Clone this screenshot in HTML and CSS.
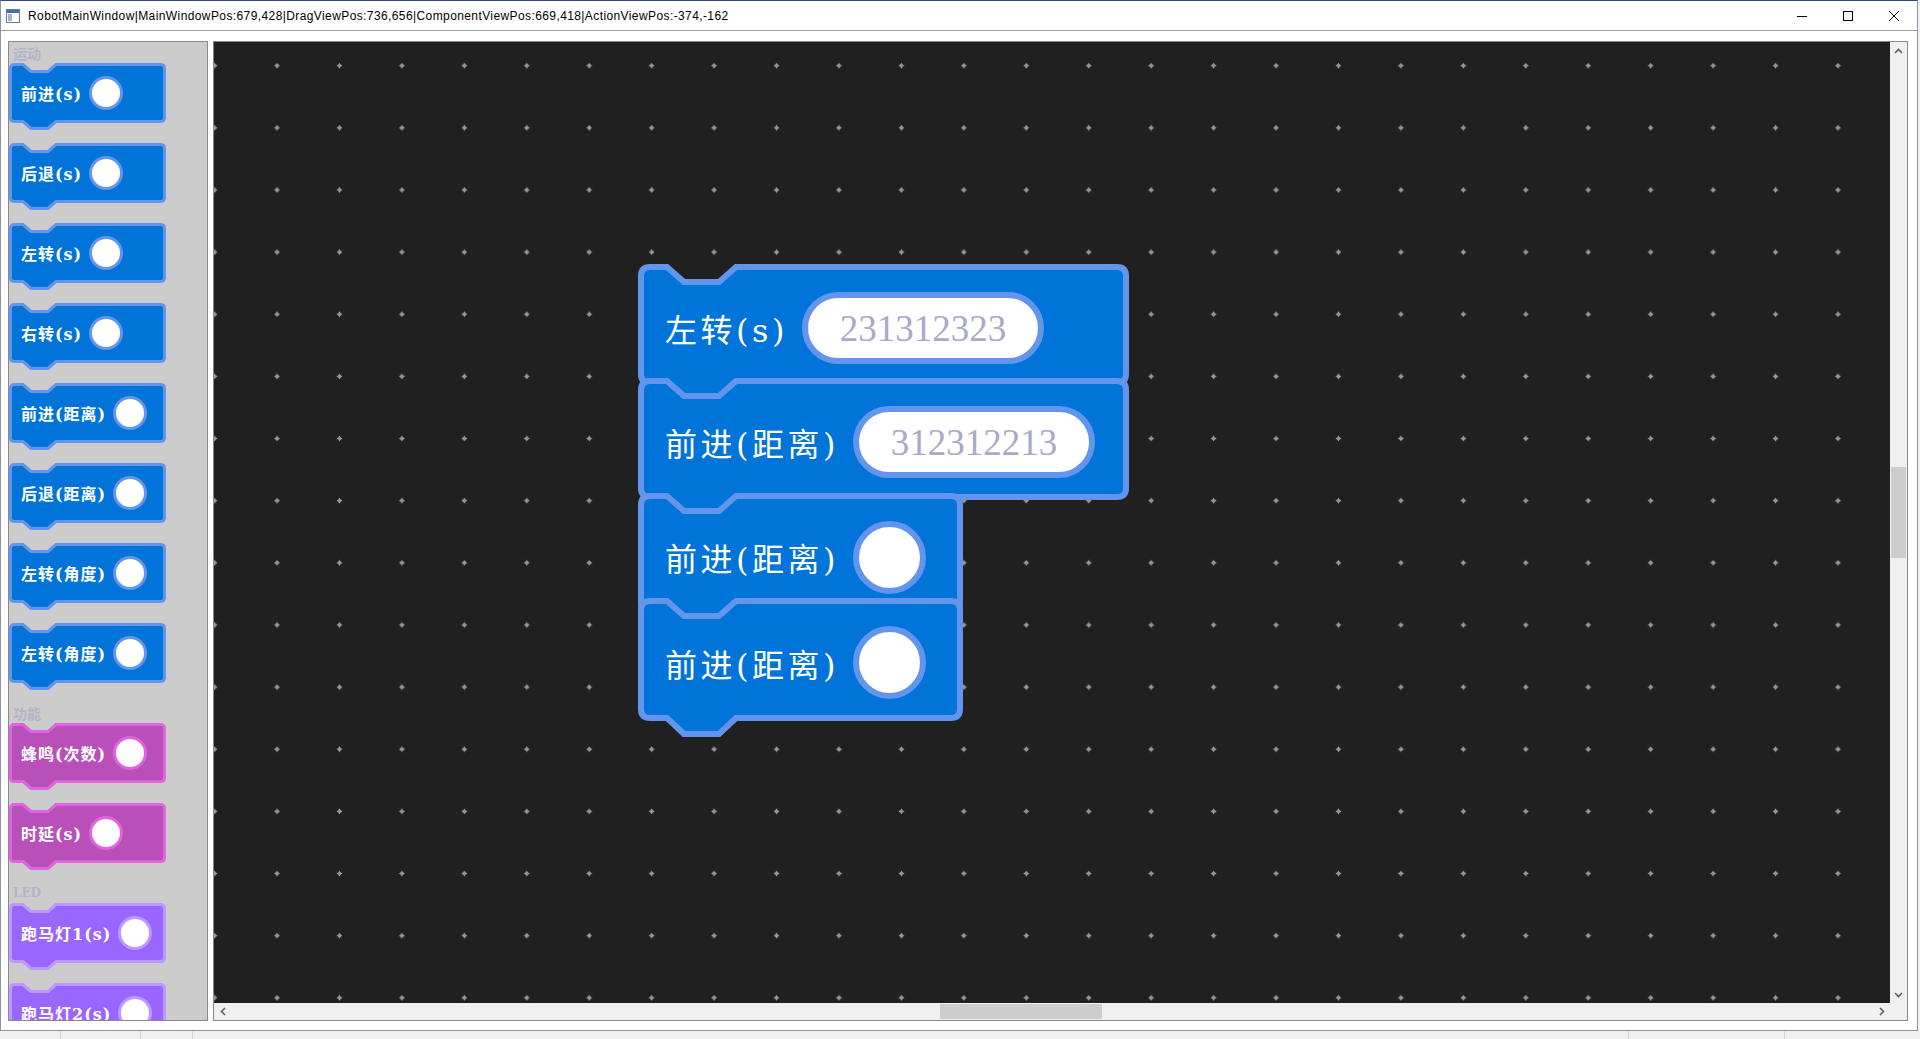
FILE: index.html
```html
<!DOCTYPE html>
<html lang="zh">
<head>
<meta charset="utf-8">
<title>RobotMainWindow</title>
<link rel="stylesheet" href="styles.css">
</head>
<body>
<svg class="defs" width="0" height="0" aria-hidden="true">
  <defs>
    <path id="pb" d="M1.5,5.5 Q1.5,1.5 5.5,1.5 H14 L22,8.5 H39 L47,1.5 H151.5 Q155.5,1.5 155.5,5.5 V54.5 Q155.5,58.5 151.5,58.5 H47 L39,65.5 H22 L14,58.5 H5.5 Q1.5,58.5 1.5,54.5 Z"/>
    <path id="cw" d="M3,12 Q3,3 12,3 H29 L46,18 H81 L98,3 H479 Q488,3 488,12 V110 Q488,119 479,119 H98 L81,134 H46 L29,119 H12 Q3,119 3,110 Z"/>
    <path id="cn" d="M3,12 Q3,3 12,3 H29 L46,18 H81 L98,3 H313 Q322,3 322,12 V111 Q322,120 313,120 H98 L81,136 H46 L29,120 H12 Q3,120 3,111 Z"/>
  </defs>
</svg>
<div class="window">
  <div class="titlebar">
    <svg class="app-icon" width="14" height="14" viewBox="0 0 14 14">
      <rect x="0.5" y="0.5" width="13" height="13" fill="#ffffff" stroke="#6d7b8f"/>
      <rect x="1" y="1" width="12" height="3" fill="#3a6fb0"/>
      <rect x="2" y="5" width="4" height="7" fill="#9fb4cf"/>
    </svg>
    <span class="title">RobotMainWindow|MainWindowPos:679,428|DragViewPos:736,656|ComponentViewPos:669,418|ActionViewPos:-374,-162</span>
    <div class="controls">
      <div class="cbtn"><svg width="10" height="10" viewBox="0 0 10 10"><path d="M0 5.5H10" stroke="#000" stroke-width="1"/></svg></div>
      <div class="cbtn"><svg width="10" height="10" viewBox="0 0 10 10"><rect x="0.5" y="0.5" width="9" height="9" fill="none" stroke="#000" stroke-width="1"/></svg></div>
      <div class="cbtn"><svg width="10" height="10" viewBox="0 0 10 10"><path d="M0 0L10 10M10 0L0 10" stroke="#000" stroke-width="1"/></svg></div>
    </div>
  </div>
  <div class="client">
    <div class="palette">
      <div class="cat">运动</div>
      <div class="pblock blue"><svg class="shape" width="157" height="70"><use href="#pb"/></svg><span class="plabel">前进(s)</span><span class="pdot"></span></div>
      <div class="pblock blue"><svg class="shape" width="157" height="70"><use href="#pb"/></svg><span class="plabel">后退(s)</span><span class="pdot"></span></div>
      <div class="pblock blue"><svg class="shape" width="157" height="70"><use href="#pb"/></svg><span class="plabel">左转(s)</span><span class="pdot"></span></div>
      <div class="pblock blue"><svg class="shape" width="157" height="70"><use href="#pb"/></svg><span class="plabel">右转(s)</span><span class="pdot"></span></div>
      <div class="pblock blue"><svg class="shape" width="157" height="70"><use href="#pb"/></svg><span class="plabel">前进(距离)</span><span class="pdot"></span></div>
      <div class="pblock blue"><svg class="shape" width="157" height="70"><use href="#pb"/></svg><span class="plabel">后退(距离)</span><span class="pdot"></span></div>
      <div class="pblock blue"><svg class="shape" width="157" height="70"><use href="#pb"/></svg><span class="plabel">左转(角度)</span><span class="pdot"></span></div>
      <div class="pblock blue"><svg class="shape" width="157" height="70"><use href="#pb"/></svg><span class="plabel">左转(角度)</span><span class="pdot"></span></div>
      <div class="cat">功能</div>
      <div class="pblock pink"><svg class="shape" width="157" height="70"><use href="#pb"/></svg><span class="plabel">蜂鸣(次数)</span><span class="pdot"></span></div>
      <div class="pblock pink"><svg class="shape" width="157" height="70"><use href="#pb"/></svg><span class="plabel">时延(s)</span><span class="pdot"></span></div>
      <div class="cat cat-latin">LED</div>
      <div class="pblock purple"><svg class="shape" width="157" height="70"><use href="#pb"/></svg><span class="plabel">跑马灯1(s)</span><span class="pdot"></span></div>
      <div class="pblock purple"><svg class="shape" width="157" height="70"><use href="#pb"/></svg><span class="plabel">跑马灯2(s)</span><span class="pdot"></span></div>
    </div>
    <div class="view">
      <div class="view-main">
        <div class="canvas">
          <div class="cblock wide b1"><svg class="shape" width="491" height="140"><use href="#cw"/></svg><span class="clabel">左转(s)</span><span class="pill">231312323</span></div>
          <div class="cblock wide b2"><svg class="shape" width="491" height="140"><use href="#cw"/></svg><span class="clabel">前进(距离)</span><span class="pill">312312213</span></div>
          <div class="cblock narrow b3"><svg class="shape" width="325" height="140"><use href="#cn"/></svg><span class="clabel">前进(距离)</span><span class="cdot"></span></div>
          <div class="cblock narrow b4"><svg class="shape" width="325" height="140"><use href="#cn"/></svg><span class="clabel">前进(距离)</span><span class="cdot"></span></div>
        </div>
        <div class="vscroll">
          <div class="sbtn"><svg width="9" height="6" viewBox="0 0 9 6"><path d="M1 5L4.5 1.5L8 5" fill="none" stroke="#606060" stroke-width="1.6"/></svg></div>
          <div class="vtrack"><div class="vthumb"></div></div>
          <div class="sbtn"><svg width="9" height="6" viewBox="0 0 9 6"><path d="M1 1L4.5 4.5L8 1" fill="none" stroke="#606060" stroke-width="1.6"/></svg></div>
        </div>
      </div>
      <div class="hbar">
        <div class="hscroll">
          <div class="sbtn"><svg width="6" height="9" viewBox="0 0 6 9"><path d="M5 1L1.5 4.5L5 8" fill="none" stroke="#606060" stroke-width="1.6"/></svg></div>
          <div class="htrack"><div class="hthumb"></div></div>
          <div class="sbtn"><svg width="6" height="9" viewBox="0 0 6 9"><path d="M1 1L4.5 4.5L1 8" fill="none" stroke="#606060" stroke-width="1.6"/></svg></div>
        </div>
        <div class="corner"></div>
      </div>
    </div>
  </div>
</div>
<div class="strip">
  <span class="sep s1"></span><span class="sep s2"></span><span class="sep s3"></span><span class="sep s4"></span><span class="sep s5"></span>
</div>
</body>
</html>
```
FILE: styles.css
```css
* { box-sizing: border-box; }
html, body { margin: 0; padding: 0; }
body {
  width: 1920px;
  height: 1039px;
  overflow: hidden;
  background: #f0f0f0;
  font-family: "Liberation Sans", "Noto Sans CJK SC", sans-serif;
}
.defs { position: absolute; width: 0; height: 0; overflow: hidden; }

.window {
  width: 1918px;
  height: 1031px;
  border: 1px solid #8d95a3;
  border-top-color: #2c4a80;
  background: #ffffff;
  display: flex;
  flex-direction: column;
}

/* ---------- title bar ---------- */
.titlebar {
  height: 30px;
  flex: none;
  display: flex;
  align-items: center;
  border-bottom: 1px solid #9c9c9c;
}
.app-icon { margin-left: 5px; flex: none; }
.title {
  margin-left: 8px;
  font-size: 12px;
  letter-spacing: 0.4px;
  color: #000;
  white-space: nowrap;
}
.controls { margin-left: auto; display: flex; height: 100%; }
.cbtn { width: 46px; height: 100%; display: flex; align-items: center; justify-content: center; }

/* ---------- client ---------- */
.client {
  flex: 1;
  display: flex;
  gap: 5px;
  padding: 10px 9px 9px 7px;
  min-height: 0;
}

/* ---------- palette ---------- */
.palette {
  width: 200px;
  flex: none;
  border: 1px solid #8a8a8a;
  background: #cccccc;
  overflow: hidden;
  display: flex;
  flex-direction: column;
  align-items: flex-start;
  padding-top: 1px;
}
.cat {
  height: 20px;
  line-height: 20px;
  padding-left: 4px;
  font-family: "Noto Sans CJK SC", sans-serif;
  font-weight: bold;
  font-size: 14px;
  color: #b4b4c8;
  flex: none;
}
.cat-latin { font-family: "DejaVu Serif", serif; font-size: 12px; }
.pblock {
  position: relative;
  flex: none;
  width: 157px;
  height: 60px;
  margin-bottom: 20px;
  display: flex;
  align-items: center;
  gap: 7px;
  padding-left: 12px;
}
.shape {
  position: absolute;
  left: 0;
  top: 0;
  overflow: visible;
}
.pblock .shape { stroke-width: 3; }
.blue .shape { fill: #0074d9; stroke: #6495ed; }
.pink .shape { fill: #b94fb9; stroke: #dd66dd; }
.purple .shape { fill: #9966ff; stroke: #bb99ff; }
.plabel {
  position: relative;
  font-family: "DejaVu Serif", "Noto Sans CJK SC", serif;
  font-weight: bold;
  font-size: 16px;
  letter-spacing: 1px;
  color: #ffffff;
  white-space: nowrap;
}
.pdot {
  position: relative;
  width: 34px;
  height: 34px;
  border-radius: 50%;
  background: #ffffff;
  border: 3px solid #6495ed;
  flex: none;
}
.pink .pdot { border-color: #dd66dd; }
.purple .pdot { border-color: #bb99ff; }

/* ---------- graphics view ---------- */
.view {
  flex: 1;
  border: 1px solid #888888;
  display: flex;
  flex-direction: column;
  min-width: 0;
}
.view-main { flex: 1; display: flex; min-height: 0; }
.canvas {
  flex: 1;
  position: relative;
  overflow: hidden;
  background-color: #202020;
  background-image:
    radial-gradient(3.2px 1.4px at center, #999999 0, #999999 65%, rgba(153,153,153,0) 100%),
    radial-gradient(1.4px 3.2px at center, #999999 0, #999999 65%, rgba(153,153,153,0) 100%);
  background-size: 62.44px 62.15px;
  background-position: -30.62px -7.38px;
}
.vscroll {
  width: 17px;
  flex: none;
  background: #f0f0f0;
  display: flex;
  flex-direction: column;
}
.sbtn {
  width: 17px;
  height: 17px;
  flex: none;
  display: flex;
  align-items: center;
  justify-content: center;
}
.vtrack { flex: 1; padding: 0 1px; }
.vthumb { margin-top: 408px; height: 91px; background: #cdcdcd; }
.hbar { height: 17px; flex: none; display: flex; }
.hscroll { flex: 1; display: flex; background: #f0f0f0; }
.htrack { flex: 1; padding: 1px 0; }
.hthumb { margin-left: 709px; width: 162px; height: 100%; background: #cdcdcd; }
.corner { width: 17px; flex: none; background: #f0f0f0; }

/* ---------- canvas blocks ---------- */
.cblock {
  position: absolute;
  left: 424px;
  height: 122px;
  display: flex;
  align-items: center;
  gap: 14px;
  padding: 6px 0 0 27px;
}
.cblock .shape { stroke-width: 6; fill: #0074d9; stroke: #6495ed; }
.wide { width: 491px; }
.narrow { width: 325px; }
.b1 { top: 222px; }
.b2 { top: 336px; }
.b3 { top: 451px; }
.b4 { top: 556px; height: 123px; }
.clabel {
  position: relative;
  font-family: "DejaVu Serif", "Noto Sans CJK SC", serif;
  font-size: 32px;
  letter-spacing: 3.5px;
  color: #ffffff;
  white-space: nowrap;
}
.pill {
  position: relative;
  width: 242px;
  height: 72px;
  flex: none;
  border: 6px solid #6495ed;
  border-radius: 36px;
  background: #ffffff;
  display: flex;
  align-items: center;
  justify-content: center;
  font-family: "Liberation Serif", serif;
  font-size: 37px;
  color: #a9a9c8;
}
.cdot {
  position: relative;
  width: 73px;
  height: 73px;
  flex: none;
  border-radius: 50%;
  background: #ffffff;
  border: 6px solid #6495ed;
}

/* ---------- strip under window ---------- */
.strip { position: relative; height: 8px; }
.sep { position: absolute; top: 0; width: 1px; height: 8px; background: #d6d6d6; }
.s1 { left: 60px; }
.s2 { left: 140px; }
.s3 { left: 192px; }
.s4 { left: 1628px; }
.s5 { left: 1784px; }
```
